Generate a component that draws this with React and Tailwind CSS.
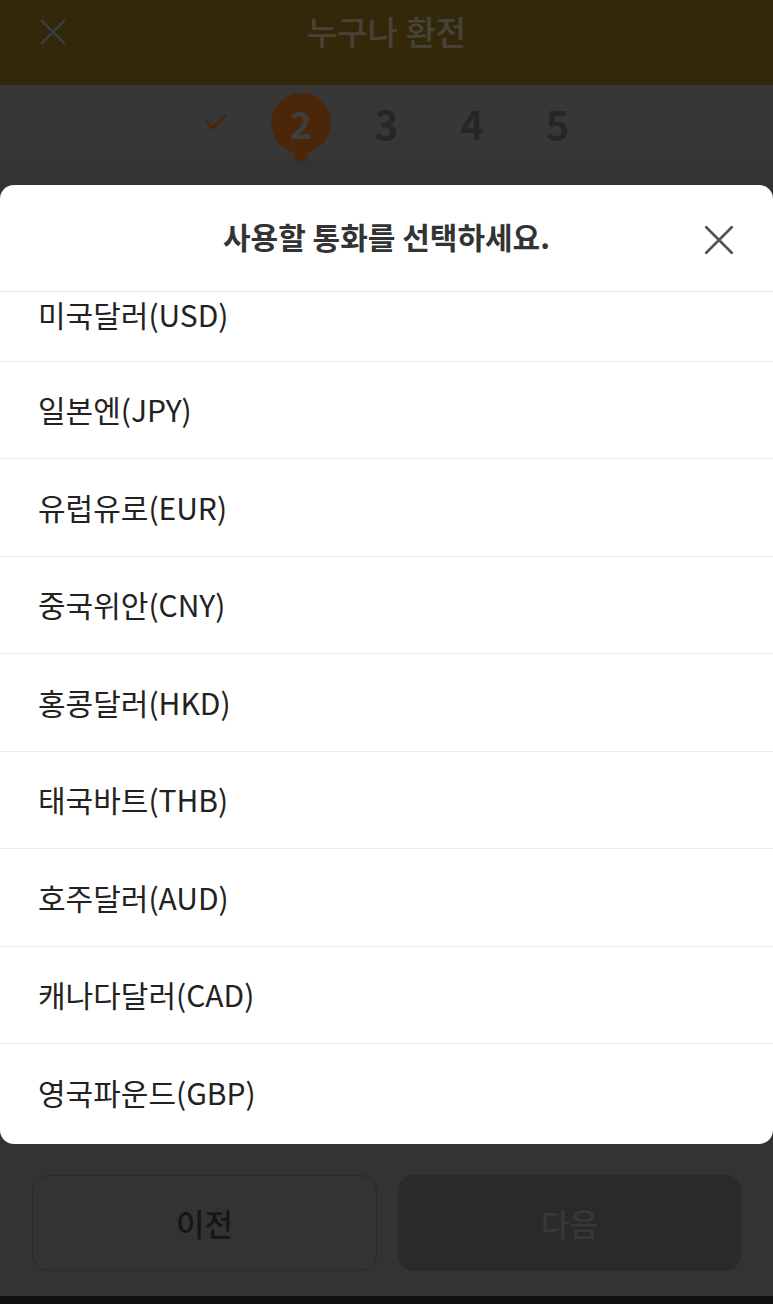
import React from 'react';

const currencies = [
    '미국달러(USD)',
    '일본엔(JPY)',
    '유럽유로(EUR)',
    '중국위안(CNY)',
    '홍콩달러(HKD)',
    '태국바트(THB)',
    '호주달러(AUD)',
    '캐나다달러(CAD)',
    '영국파운드(GBP)',
];

const font = { fontFamily: '"Noto Sans CJK KR", "Noto Sans", sans-serif' };

const CloseIcon = ({ className }) => (
    <svg viewBox="0 0 40 40" className={className} fill="none" stroke="currentColor" strokeWidth="3.2" strokeLinecap="round">
        <path d="M5 5 L35 35 M35 5 L5 35" />
    </svg>
);

export default function App() {
    return (
        <div className="relative w-[773px] h-[1304px] overflow-hidden bg-[#333333] font-['Noto_Sans_CJK_KR',sans-serif]">
            {/* Header (dimmed) */}
            <div className="h-[85px] bg-[#33290a] flex items-center relative">
                <CloseIcon className="absolute left-[36px] top-[17px] w-[34px] h-[30px] text-[#3a3f45]" />
                <div className="w-full text-center text-[33px] font-medium text-[#474338] -mt-[22px]">누구나 환전</div>
            </div>

            {/* Steps */}
            <div className="h-[77px] bg-[#373737] border-b border-[#2f2f2f] flex items-center justify-center">
                <div className="flex items-center gap-[25.5px]">
                    <div className="w-[60px] flex justify-center">
                        <svg viewBox="0 0 30 24" className="w-[26px] h-[20px] text-[#4c2608]" fill="none" stroke="currentColor" strokeWidth="4" strokeLinecap="round" strokeLinejoin="round">
                            <path d="M4 11 L11 18 L26 4" />
                        </svg>
                    </div>
                    <div className="relative w-[60px] h-[60px] rounded-full bg-[#4c2608] flex items-center justify-center">
                        <span className="text-[38px] font-bold text-[#3e3e3e] leading-none">2</span>
                        <div className="absolute left-1/2 -translate-x-1/2 top-[54px] w-[14px] h-[14px] bg-[#4c2608] rounded-b-[6px]" />
                    </div>
                    <div className="w-[60px] text-center text-[40px] font-bold text-[#262626] leading-none">3</div>
                    <div className="w-[60px] text-center text-[40px] font-bold text-[#262626] leading-none">4</div>
                    <div className="w-[60px] text-center text-[40px] font-bold text-[#262626] leading-none">5</div>
                </div>
            </div>

            {/* Bottom buttons (dimmed) */}
            <div className="absolute left-0 right-0 top-[1175px] px-[32px] flex gap-[21px]">
                <div className="flex-1 h-[96px] rounded-[16px] border border-[#292929] bg-[#333333] flex items-center justify-center text-[31px] font-medium text-[#161616]">
                    이전
                </div>
                <div className="flex-1 h-[96px] rounded-[16px] bg-[#2a2a2a] flex items-center justify-center text-[31px] font-medium text-[#383838]">
                    다음
                </div>
            </div>
            <div className="absolute left-0 right-0 bottom-0 h-[8px] bg-[#111111]" />

            {/* Modal */}
            <div className="absolute left-0 right-0 top-[185px] h-[959px] bg-white rounded-[14px] flex flex-col overflow-hidden" style={font}>
                <div className="relative h-[107px] shrink-0 flex items-center justify-center border-b border-[#e6e6e6]">
                    <span className="text-[30px] font-bold text-[#333333] -mt-[4px]">사용할 통화를 선택하세요.</span>
                    <CloseIcon className="absolute right-[37px] top-[38px] w-[34px] h-[34px] text-[#555555]" />
                </div>
                <div className="flex-1 overflow-hidden">
                    <ul className="-mt-[24px]">
                        {currencies.map((c, i) => (
                            <li
                                key={c}
                                className={`flex items-center pl-[38px] text-[30px] text-[#222222] ${i === 0 ? 'h-[93.5px]' : 'h-[97.5px]'} ${i < currencies.length - 1 ? 'border-b border-[#ececec]' : ''}`}
                            >
                                {c}
                            </li>
                        ))}
                    </ul>
                </div>
            </div>
        </div>
    );
}
